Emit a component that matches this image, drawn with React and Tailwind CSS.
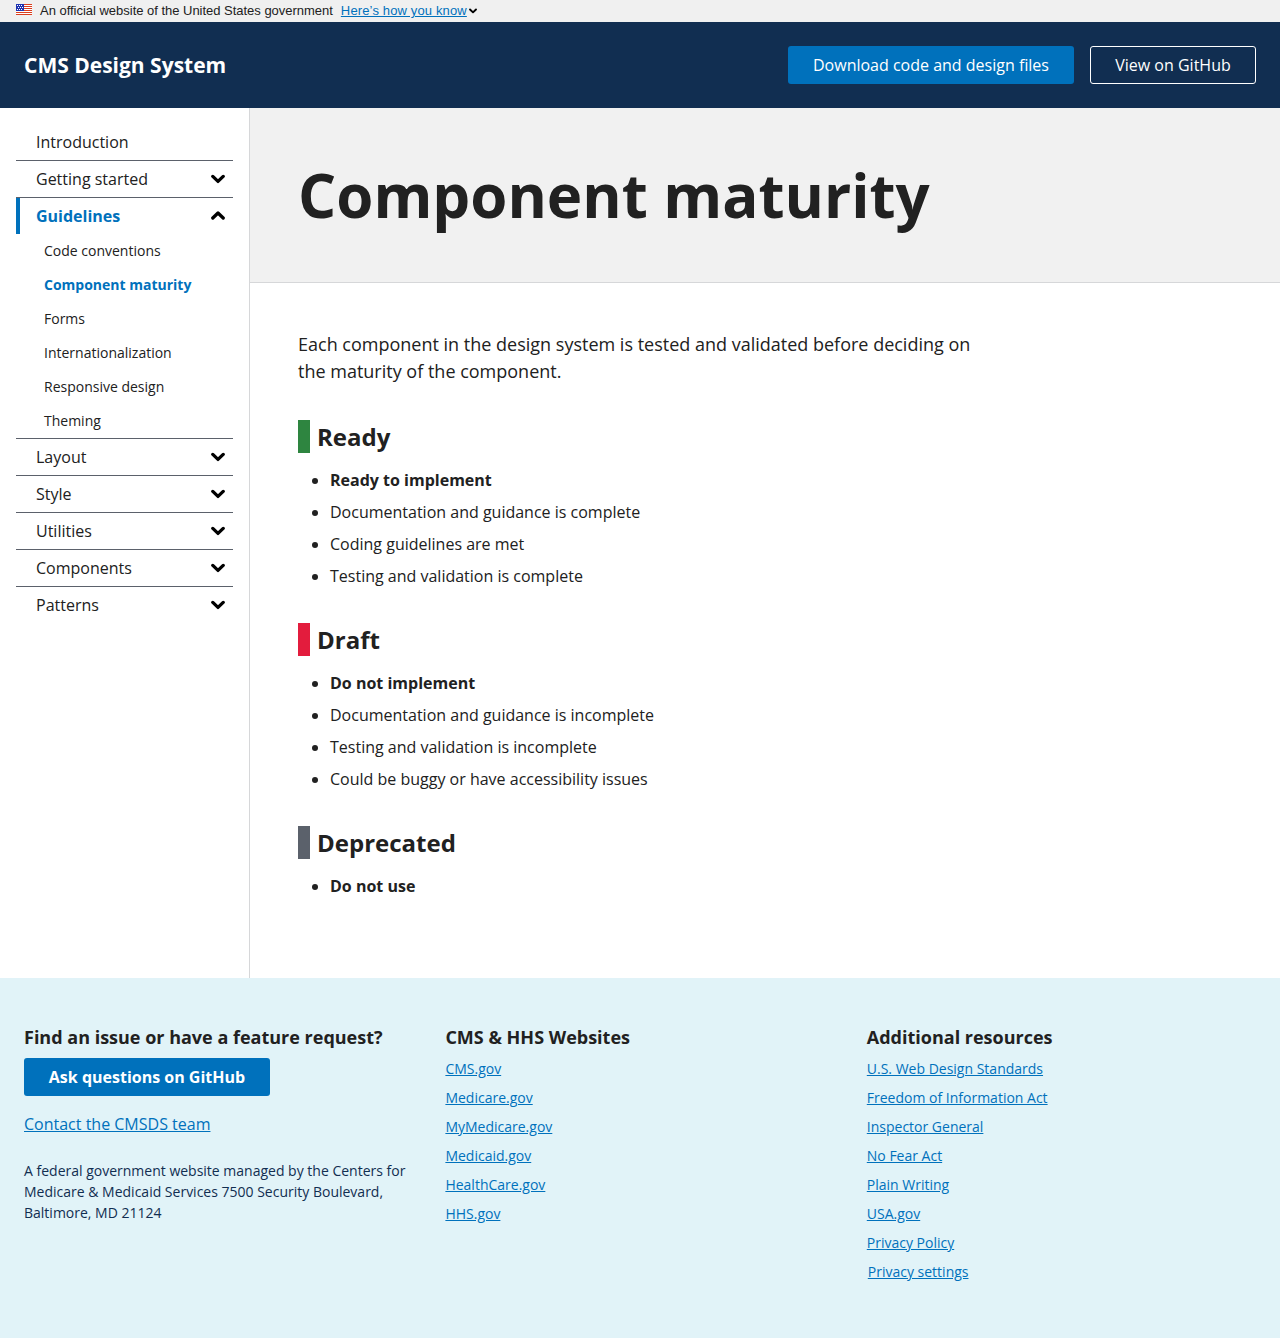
const nav = ['Layout', 'Style', 'Utilities', 'Components', 'Patterns'];
const sub = ['Code conventions', 'Component maturity', 'Forms', 'Internationalization', 'Responsive design', 'Theming'];

function Chevron({ up, className = 'h-[10px] w-[14px]' }) {
  return (
    <svg viewBox="0 0 14 10" className={className} fill="none" stroke="currentColor" strokeWidth="3.3" strokeLinecap="round" strokeLinejoin="round">
      <path d={up ? 'M1.8 7 7 2l5.2 5' : 'M1.8 2.4 7 7.4l5.2-5'} />
    </svg>
  );
}

function Flag() {
  const stars = [
    [1, 1], [3, 1], [5, 1],
    [2, 3], [4, 3], [6, 3],
    [1, 5], [3, 5], [5, 5],
  ];
  return (
    <svg viewBox="0 0 16 11" className="h-[11px] w-4" shapeRendering="crispEdges">
      <rect width="16" height="11" fill="#fff" />
      {[0, 2, 4, 6, 8, 10].map((y) => (
        <rect key={y} y={y} width="16" height="1" fill="#db3e1f" />
      ))}
      <rect width="8" height="7" fill="#1e33b1" />
      {stars.map(([x, y]) => <rect key={x + '-' + y} x={x} y={y} width="1" height="1" fill="#fff" />)}
    </svg>
  );
}

function NavRow({ label, first, chevron = true }) {
  return (
    <li className={'flex h-[37px] items-center justify-between pl-5 pr-2 text-base ' + (first ? '' : 'border-t border-[#5b616b]')}>
      <span>{label}</span>
      {chevron && <Chevron className="h-[10px] w-[14px] text-black" />}
    </li>
  );
}

function Section({ title, bar, items }) {
  return (
    <section className="mb-[31px]">
      <h2 className={'mb-[11px] h-[33px] border-l-[12px] pl-[7px] text-2xl font-bold leading-[33px] ' + bar}>{title}</h2>
      <ul className="list-disc pl-8">
        {items.map((t, i) => (
          <li key={t} className={'h-8 leading-8 ' + (i === 0 ? 'font-bold' : '')}>{t}</li>
        ))}
      </ul>
    </section>
  );
}

function Links({ title, items }) {
  return (
    <div className="w-[421.4px] shrink-0">
      <h3 className="h-[27px] text-lg font-bold leading-[27px]">{title}</h3>
      <ul className="mt-[3px] text-sm text-[#0071bc]">
        {items.map((t) => (
          <li key={t} className={'h-[29px] leading-[29px] ' + (t === 'Privacy settings' ? 'pl-px' : '')}>
            <a className="underline">{t}</a>
          </li>
        ))}
      </ul>
    </div>
  );
}

export default function App() {
  return (
    <div className="flex h-[1338px] w-[1280px] flex-col overflow-hidden bg-white font-['Open_Sans',sans-serif] text-base text-[#212121]">
      <div className="flex h-[22px] items-center bg-[#f0f0f0] pl-4 font-['Liberation_Sans',sans-serif] text-[13px]">
        <div className="pb-[3px]"><Flag /></div>
        <span className="ml-2 tracking-[-0.02px]">An official website of the United States government</span>
        <a className="ml-2 tracking-[0.14px] text-[#0071bc] underline">Here’s how you know</a>
        <Chevron className="ml-0.5 h-[6px] w-2 text-black" />
      </div>
      <header className="flex h-[86px] items-center justify-between bg-[#112e51] px-6 text-white">
        <div className="pt-0.5 text-[21px] font-bold">CMS Design System</div>
        <div className="flex gap-4">
          <a className="flex h-[38px] w-[286px] items-center justify-center rounded-[3px] bg-[#0071bc]">Download code and design files</a>
          <a className="flex h-[38px] w-[166px] items-center justify-center rounded-[3px] border border-white">View on GitHub</a>
        </div>
      </header>
      <div className="flex h-[870px]">
        <nav className="w-[250px] border-r border-[#d6d7d9] px-4 pt-[15px]">
          <ul>
            <NavRow label="Introduction" first chevron={false} />
            <NavRow label="Getting started" />
            <li>
              <div className="flex h-[37px] items-center justify-between border-t border-[#5b616b] pr-2 font-bold text-[#0071bc]">
                <span className="flex h-full items-center border-l-4 border-[#0071bc] pl-4">Guidelines</span>
                <Chevron up className="h-[10px] w-[14px] text-black" />
              </div>
              <ul className="pl-7 text-sm">
                {sub.map((t) => (
                  <li key={t} className={'h-[34px] leading-[34px] ' + (t === 'Component maturity' ? 'font-bold text-[#0071bc]' : '')}>{t}</li>
                ))}
              </ul>
            </li>
            {nav.map((t) => <NavRow key={t} label={t} />)}
          </ul>
        </nav>
        <main className="flex-1">
          <div className="flex h-[175px] items-center border-b border-[#d6d7d9] bg-[#f1f1f1] pl-12">
            <h1 className="text-[60px] font-bold leading-[78px]">Component maturity</h1>
          </div>
          <div className="pl-12 pt-12">
            <p className="mb-[35px] w-[690px] text-lg leading-[27px]">Each component in the design system is tested and validated before deciding on the maturity of the component.</p>
            <Section title="Ready" bar="border-[#2e8540]" items={['Ready to implement', 'Documentation and guidance is complete', 'Coding guidelines are met', 'Testing and validation is complete']} />
            <Section title="Draft" bar="border-[#e31c3d]" items={['Do not implement', 'Documentation and guidance is incomplete', 'Testing and validation is incomplete', 'Could be buggy or have accessibility issues']} />
            <Section title="Deprecated" bar="border-[#5b616b]" items={['Do not use']} />
          </div>
        </main>
      </div>
      <footer className="flex flex-1 bg-[#e1f3f8] px-6 pt-[46px]">
        <div className="w-[421.4px] shrink-0">
          <h3 className="h-[27px] text-lg font-bold leading-[27px]">Find an issue or have a feature request?</h3>
          <a className="mt-[7px] flex h-[38px] w-[246px] items-center justify-center rounded-[3px] bg-[#0071bc] font-bold text-white">Ask questions on GitHub</a>
          <a className="mt-4 block leading-6 text-[#0071bc] underline">Contact the CMSDS team</a>
          <p className="mt-6 w-[390px] text-sm leading-[21px] text-[#112e51]">A federal government website managed by the Centers for Medicare &amp; Medicaid Services 7500 Security Boulevard, Baltimore, MD 21124</p>
        </div>
        <Links title="CMS & HHS Websites" items={['CMS.gov', 'Medicare.gov', 'MyMedicare.gov', 'Medicaid.gov', 'HealthCare.gov', 'HHS.gov']} />
        <Links title="Additional resources" items={['U.S. Web Design Standards', 'Freedom of Information Act', 'Inspector General', 'No Fear Act', 'Plain Writing', 'USA.gov', 'Privacy Policy', 'Privacy settings']} />
      </footer>
    </div>
  );
}
